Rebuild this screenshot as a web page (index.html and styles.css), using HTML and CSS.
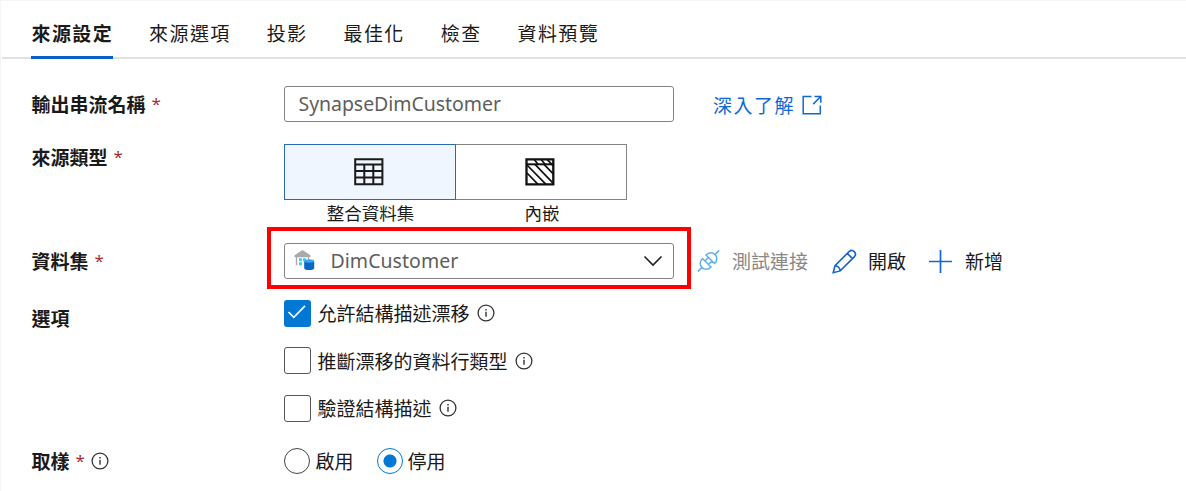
FILE: index.html
```html
<!DOCTYPE html>
<html lang="zh-Hant">
<head>
<meta charset="utf-8">
<title>來源設定</title>
<link rel="stylesheet" href="styles.css">
</head>
<body>
<svg class="defs" width="0" height="0" aria-hidden="true">
  <symbol id="info" viewBox="0 0 18 18"><circle cx="9" cy="9" r="7.9" fill="none" stroke="#333" stroke-width="1.3"/><path d="M9 7.8v5M9 5v1.6" stroke="#333" stroke-width="1.4"/></symbol>
</svg>
<main class="panel">
  <nav class="tabs">
    <a class="tab active">來源設定</a>
    <a class="tab">來源選項</a>
    <a class="tab">投影</a>
    <a class="tab">最佳化</a>
    <a class="tab">檢查</a>
    <a class="tab">資料預覽</a>
  </nav>
  <form class="form">
    <div class="row name-row">
      <div class="label">輸出串流名稱<span class="req">*</span></div>
      <div class="field"><span class="stream-name">SynapseDimCustomer</span></div>
      <a class="learn">深入了解
        <svg width="20" height="20" viewBox="0 0 20 20" fill="none" stroke="#1268d3" stroke-width="1.5"><path d="M9.500 1.500H1.200v17.300H18.300V10.500M12.500 1.500h6.300v6.300M18.500 1.800l-7.300 7.300"/></svg>
      </a>
    </div>
    <div class="row type-row">
      <div class="label">來源類型<span class="req">*</span></div>
      <div class="types">
        <div class="tile selected">
          <svg width="30" height="28" viewBox="0 0 30 28" fill="none" stroke="#1b1a19" stroke-width="2"><path d="M1.200 1.200h27.200v25H1.200zM1.200 6.400h27.200M1.200 13h27.200M1.200 19.600h27.200M10.300 6.400v20M19.300 6.400v20"/></svg>
        </div>
        <div class="tile">
          <svg width="30" height="28" viewBox="0 0 30 28" fill="none" stroke="#111" stroke-width="2"><path stroke-width="2.300" d="M1.500 1.300h26.800v25H1.500z"/><path d="M1.500 6.300h26.800"/><path stroke-width="1.700" d="M9 1.300l4 5M16 1.300l4 5M22 1.300l6.300 6.500M2 7l19 19.300M2 15l11 11.300M10 6.300l18.300 19M19 6.300l9.300 9.600"/></svg>
        </div>
        <div class="caption">整合資料集</div>
        <div class="caption">內嵌</div>
      </div>
    </div>
    <div class="row dataset-row">
      <div class="label">資料集<span class="req">*</span></div>
      <div class="field select">
        <svg width="22" height="22" viewBox="0 0 22 22">
          <path d="M0.500 5.200 8.500 0l8 5.200v2h-1.400v3H14V7.200H3.200v8H1.800v-8H.5z" fill="#aaa"/>
          <path d="M5 8.200h3v3H5zm4 0h3v3H9zM5 12.200h3v3H5z" fill="#32d4f5"/>
          <path d="M10.200 11.200v7c0 2.500 10 2.500 10 0v-7z" fill="#0867c8"/>
          <ellipse cx="15.200" cy="11" rx="5" ry="1.700" fill="#35a9e9"/>
        </svg>
        <span class="dataset-name">DimCustomer</span>
        <svg class="chevron" width="20" height="12" viewBox="0 0 20 12" fill="none" stroke="#222" stroke-width="1.600"><path d="M1.500 1.500 10 10l8.500-8.500"/></svg>
        <span class="highlight"></span>
      </div>
      <div class="actions">
        <span class="action disabled">
          <svg width="24" height="24" viewBox="0 0 24 24" fill="none" stroke="#5eb0ed" stroke-width="1.500"><g transform="translate(11.500 12) rotate(-45)"><path d="M-2.500-6v12C-11.500 6.500-11.500-6.500-2.500-6zM2.500-6v12C11.500 6.500 11.500-6.500 2.500-6zM-15 0h6M9 0h6M-2.500-2.500h5M-2.500 2.500h5"/></g></svg>
          測試連接
        </span>
        <span class="action open">
          <svg width="25" height="25" viewBox="0 0 25 25" fill="none" stroke="#1464cf" stroke-width="1.600"><path d="M1.200 23.700 3 16.700 17.300 2.400c3.500-3 8 1.800 5.200 5.200L8.200 21.900zM15.300 4.400l5.200 5.200M3 16.700c2.900.2 4.900 2.200 5.200 5.200"/></svg>
          開啟
        </span>
        <span class="action add">
          <svg width="23" height="23" viewBox="0 0 23 23" stroke="#1268d3" stroke-width="1.700"><path d="M11.500 0v23M0 11.500h23"/></svg>
          新增
        </span>
      </div>
    </div>
    <div class="row options-row">
      <div class="label">選項</div>
      <div class="options">
        <div class="option"><span class="box checked"><svg width="27" height="27" viewBox="0 0 27 27" fill="none" stroke="#fff" stroke-width="1.700"><path d="M4.500 12l5.300 5.300L21 5.800"/></svg></span>允許結構描述漂移<svg class="info" width="18" height="18"><use href="#info"/></svg></div>
        <div class="option"><span class="box"></span>推斷漂移的資料行類型<svg class="info" width="18" height="18"><use href="#info"/></svg></div>
        <div class="option"><span class="box"></span>驗證結構描述<svg class="info" width="18" height="18"><use href="#info"/></svg></div>
      </div>
    </div>
    <div class="row sampling-row">
      <div class="label">取樣<span class="req">*</span><svg class="info" width="18" height="18"><use href="#info"/></svg></div>
      <div class="radios">
        <span class="choice"><span class="radio"></span>啟用</span>
        <span class="choice"><span class="radio on"></span>停用</span>
      </div>
    </div>
  </form>
</main>
</body>
</html>
```
FILE: styles.css
```css
* { box-sizing: border-box; }
body {
  margin: 0;
  background: #fff;
  color: #1b1a19;
  font: 19px/28px "Noto Sans CJK TC", sans-serif;
  overflow: hidden;
}
svg { display: block; flex: none; }
.defs { position: absolute; }
.panel {
  height: 491px;
  border-top: 1px solid #f5f5f5;
  border-left: 1px solid #f5f5f5;
}
.tabs {
  display: flex;
  gap: 35px;
  height: 58px;
  margin-left: 1px;
  padding-left: 29px;
  border-bottom: 2px solid #e1e1e1;
}
.tab {
  height: 58px;
  padding: 18px 0 0 1px;
  letter-spacing: 1.400px;
  white-space: nowrap;
}
.tab.active { padding-left: 0.500px; font-weight: 700; border-bottom: 3px solid #0860ce; }
.form { padding: 27px 0 0 30.600px; }
.row { display: flex; align-items: flex-start; white-space: nowrap; }
.label { display: flex; flex: none; width: 252.900px; font-weight: 700; }
.req {
  margin-left: 6px;
  color: #a4262c;
  font-family: "Open Sans", sans-serif;
  font-size: 17px;
  font-weight: 400;
}
.field {
  display: flex;
  align-items: center;
  flex: none;
  width: 389.500px;
  height: 36px;
  border: 1px solid #85827f;
  border-radius: 3px;
  color: #605e5c;
  font-family: "Noto Sans", sans-serif;
  font-size: 19.500px;
}
.stream-name { padding-left: 13px; letter-spacing: -0.050px; }
.name-row { height: 58px; }
.name-row .label { padding-top: 4px; }
.learn {
  display: flex;
  align-items: center;
  gap: 7px;
  margin: 5px 0 0 39px;
  color: #1268d3;
  letter-spacing: 1.500px;
}
.type-row { height: 99px; }
.type-row .label { margin-top: -1px; }
.types { display: grid; grid-template-columns: 172px 171px; grid-template-rows: 56px 26px; }
.tile {
  display: flex;
  align-items: center;
  justify-content: center;
  padding-right: 2px;
  border: 1px solid #85827f;
  border-left: 0;
}
.tile.selected { border: 1px solid #2b69b3; background: #eff6ff; }
.caption { text-align: center; font-size: 17.500px; line-height: 25px; }
.dataset-row { height: 56px; }
.dataset-row .label { padding-top: 4px; }
.select { position: relative; padding-left: 9px; }
.dataset-name { margin-left: 14px; letter-spacing: 0.050px; }
.chevron { margin: 0 10px 0 auto; }
.highlight {
  position: absolute;
  inset: -17px -18px -11px -18px;
  border: 4px solid #f00;
}
.actions { display: flex; margin: 4px 0 0 23px; }
.action { display: flex; align-items: center; gap: 11px; }
.disabled { color: #8a8886; }
.open { margin-left: 24px; }
.add { margin-left: 23px; gap: 13px; }
.options-row { height: 148px; }
.options-row .label { padding-top: 5px; }
.option { display: flex; align-items: center; height: 47.500px; padding-bottom: 19px; }
.box {
  width: 27px;
  height: 27px;
  margin-right: 6px;
  border: 1px solid #555;
  border-radius: 3px;
  flex: none;
}
.box.checked { border: 0; background: #0078d4; }
.info { margin-left: 7px; }
.sampling-row .info { margin: 5px 0 0 6px; }
.radios { display: flex; gap: 23px; }
.choice { display: flex; align-items: center; gap: 5px; }
.radio { width: 26px; height: 26px; border: 1px solid #444; border-radius: 50%; }
.radio.on {
  border: 1px solid #0078d4;
  background: radial-gradient(circle, #0078d4 6px, transparent 7px);
}
```
